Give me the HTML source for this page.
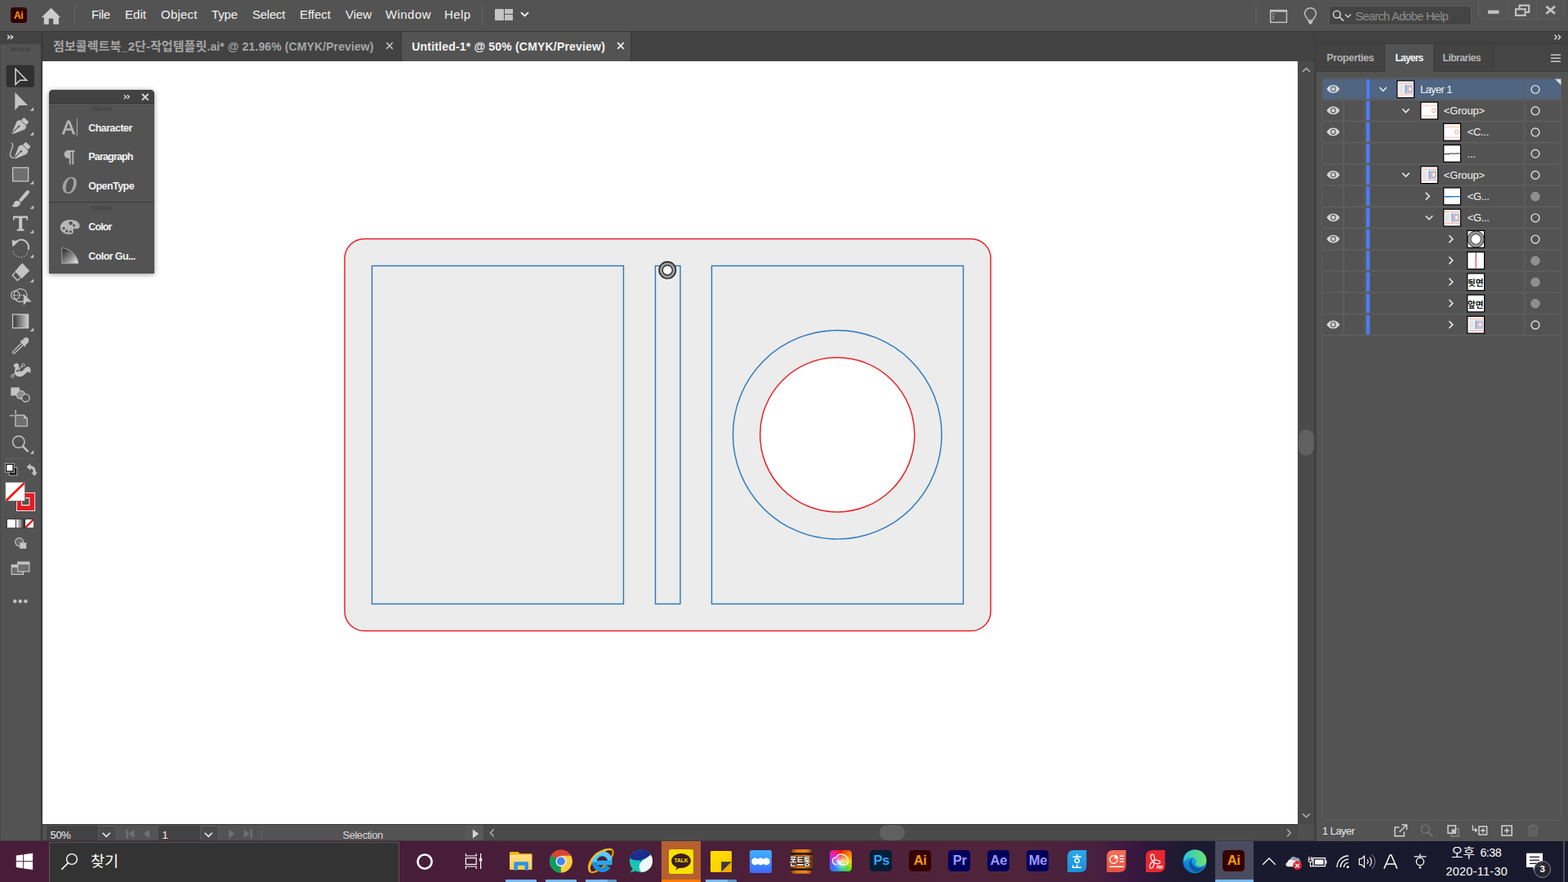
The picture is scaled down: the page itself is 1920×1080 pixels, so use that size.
<!DOCTYPE html>
<html><head><meta charset="utf-8"><title>Untitled-1* @ 50% (CMYK/Preview)</title>
<style>
*{box-sizing:border-box;margin:0;padding:0}
html,body{width:1920px;height:1080px;overflow:hidden;background:#535353}
body{position:relative;font-family:"Liberation Sans",sans-serif;color:#e6e6e6;font-size:13px}
.a{position:absolute}
.t{position:absolute;white-space:nowrap;line-height:1}
svg{position:absolute;overflow:visible}
/* menubar */
#menubar{left:0;top:0;width:1920px;height:38px;background:#535353}
#mline{left:0;top:38px;width:1920px;height:1px;background:#383838}
.menu{font-size:15px;color:#f0f0f0;top:10px}
/* tabbar */
#tabbar{left:52px;top:39px;width:1559px;height:36px;background:#424242}
/* toolbar */
#tb{left:0;top:39px;width:52px;height:991px;background:#484848}
#tbhead{left:0;top:0;width:51px;height:15px;background:#424242}
#tbbody{left:1px;top:15px;width:48px;height:976px;background:#535353;border-radius:3px 3px 0 0}
#tbline{left:51px;top:0;width:1px;height:991px;background:#303030}
/* canvas */
#canvas{left:52px;top:75px;width:1537px;height:934px;background:#fff}
#vscroll{left:1589px;top:75px;width:20px;height:934px;background:#4a4a4a}
/* status */
#status{left:52px;top:1009px;width:1559px;height:21px;background:#535353}
/* right dock */
#dock{left:1609px;top:39px;width:311px;height:991px;background:#535353}
/* taskbar */
#task{left:0;top:1030px;width:1920px;height:50px;background:linear-gradient(90deg,#481d39 0%,#481d39 30%,#4c2039 52%,#50243a 64%,#47203e 70%,#3d1740 72%,#2c1838 73.6%,#1d1a31 75.4%,#1a1a2e 80%,#19192d 100%)}
</style></head><body>
<div class="a" id="menubar"></div><div class="a" id="mline"></div>
<!-- Ai logo -->
<div class="a" style="left:13px;top:9px;width:20px;height:19px;background:#330000;border-radius:3.5px"></div>
<div class="t" style="left:16.9px;top:12.9px;font-size:12px;font-weight:700;color:#ff9a00;letter-spacing:-0.2px">Ai</div>
<!-- home -->
<svg style="left:50px;top:9px" width="25" height="21" viewBox="50 9 25 21"><path fill="#cbcbcb" d="M62.5 9.8 L50.8 21.3 H53.8 V29.8 H59.8 V22.8 H65.2 V29.8 H71.9 V21.3 H74.2 Z"/></svg>
<div class="a" style="left:90.4px;top:6px;width:2.2px;height:25px;background:#5b5b5b"></div>
<div class="t" style="left:112.00px;top:10.30px;font-size:15.0px;letter-spacing:-0.391px;color:#f2f2f2;">File</div>
<div class="t" style="left:153.00px;top:10.30px;font-size:15.0px;letter-spacing:0.047px;color:#f2f2f2;">Edit</div>
<div class="t" style="left:197.00px;top:10.30px;font-size:15.0px;letter-spacing:0.228px;color:#f2f2f2;">Object</div>
<div class="t" style="left:259.00px;top:10.30px;font-size:15.0px;letter-spacing:-0.177px;color:#f2f2f2;">Type</div>
<div class="t" style="left:309.00px;top:10.30px;font-size:15.0px;letter-spacing:-0.241px;color:#f2f2f2;">Select</div>
<div class="t" style="left:367.00px;top:10.30px;font-size:15.0px;letter-spacing:-0.019px;color:#f2f2f2;">Effect</div>
<div class="t" style="left:423.00px;top:10.30px;font-size:15.0px;letter-spacing:-0.083px;color:#f2f2f2;">View</div>
<div class="t" style="left:472.00px;top:10.30px;font-size:15.0px;letter-spacing:0.428px;color:#f2f2f2;">Window</div>
<div class="t" style="left:544.00px;top:10.30px;font-size:15.0px;letter-spacing:0.380px;color:#f2f2f2;">Help</div>
<div class="a" style="left:589.6px;top:6px;width:2.2px;height:25px;background:#5b5b5b"></div>
<!-- workspace icon -->
<div class="a" style="left:606.4px;top:10.8px;width:10.4px;height:14.2px;background:#c4c4c4;border-radius:.5px"></div>
<div class="a" style="left:617.8px;top:10.8px;width:10.4px;height:6.4px;background:#c4c4c4;border-radius:.5px"></div>
<div class="a" style="left:617.8px;top:18.2px;width:10.4px;height:6.8px;background:#c4c4c4;border-radius:.5px"></div>
<svg style="left:636px;top:13px" width="13" height="9" viewBox="0 0 13 9"><path d="M2 2.2 L6.5 6.4 L11 2.2" fill="none" stroke="#f0f0f0" stroke-width="1.9"/></svg>
<!-- right side -->
<div class="a" style="left:1536.8px;top:6px;width:2.2px;height:25px;background:#5b5b5b"></div>
<div class="a" style="left:1626.6px;top:6.5px;width:175px;height:24px;background:#444;border:1px solid #5b5b5b;border-radius:3px"></div>
<div class="t" style="left:1659.40px;top:12.53px;font-size:14.5px;letter-spacing:-0.660px;color:#8e8e8e;">Search Adobe Help</div>
<div class="a" style="left:1810.2px;top:-4px;width:105.2px;height:27.5px;background:#555;border:1px solid #606060;border-radius:5px"></div>
<div class="a" style="left:1846px;top:0;width:1px;height:23px;background:#5e5e5e"></div>
<div class="a" style="left:1880.5px;top:0;width:1px;height:23px;background:#5e5e5e"></div>
<svg style="left:1540px;top:0" width="380" height="38" viewBox="1540 0 380 38">
<rect x="1555.7" y="12.6" width="19.8" height="14.8" fill="none" stroke="#c4c4c4" stroke-width="1.4"/>
<rect x="1555.7" y="12.2" width="19.8" height="2.4" fill="#c4c4c4"/>
<rect x="1558.4" y="16.6" width="1.6" height="1.4" fill="#c4c4c4"/><rect x="1558.4" y="19.4" width="1.6" height="1.4" fill="#c4c4c4"/><rect x="1558.4" y="22.2" width="1.6" height="1.4" fill="#c4c4c4"/>
<path d="M1601.6 24.6 C1601.6 22.6 1597.6 20.6 1597.6 16.8 A7 7 0 0 1 1611.6 16.8 C1611.6 20.6 1607.6 22.6 1607.6 24.6 Z" fill="none" stroke="#c4c4c4" stroke-width="1.4"/>
<path d="M1601.8 25.6 H1607.4 V27.6 L1604.6 30 L1601.8 27.6 Z" fill="#c4c4c4"/>
<circle cx="1637" cy="17.6" r="4.4" fill="none" stroke="#d0d0d0" stroke-width="1.6"/><path d="M1640.2 20.8 L1645.4 25.6" stroke="#d0d0d0" stroke-width="1.8"/>
<path d="M1647 17.6 L1650.6 21 L1654.2 17.6" fill="none" stroke="#d0d0d0" stroke-width="1.4"/>
<rect x="1822" y="12.6" width="13.4" height="4.2" fill="#c2c2c2"/>
<path d="M1860.6 11 V6.6 H1872.2 V14.8 H1868.6" fill="none" stroke="#c2c2c2" stroke-width="2.2"/>
<rect x="1856" y="11.2" width="11.6" height="7.6" fill="none" stroke="#c2c2c2" stroke-width="2.2"/>
<path d="M1893.4 7.8 L1904 16.8 M1904 7.8 L1893.4 16.8" stroke="#c2c2c2" stroke-width="2.8"/>
</svg>

<div class="a" id="tabbar"></div>
<!-- tab 1 (inactive) -->
<div class="a" style="left:491px;top:39px;width:1px;height:36px;background:#383838"></div>
<svg style="left:64.5px;top:47.00px;" width="188.37" height="20.25" viewBox="0 -1000 12558 1350"><text x="0" y="0" font-size="1000" font-weight="700" fill="#a6a6a6" textLength="12558" lengthAdjust="spacingAndGlyphs" font-family="'Liberation Sans','Noto Sans CJK KR',sans-serif">점보콜렉트북_2단-작업템플릿</text></svg>
<div class="t" style="left:253.40px;top:50.15px;font-size:14.0px;font-weight:700;letter-spacing:0.108px;color:#a6a6a6;">.ai* @ 21.96% (CMYK/Preview)</div>
<svg style="left:472px;top:51px" width="10" height="10" viewBox="0 0 10 10"><path d="M1.2 1.2 L8.8 8.8 M8.8 1.2 L1.2 8.8" stroke="#b8b8b8" stroke-width="1.8" fill="none"/></svg>
<!-- tab 2 (active) -->
<div class="a" style="left:492px;top:39px;width:280px;height:36px;background:#535353"></div>
<div class="a" style="left:772px;top:39px;width:1px;height:36px;background:#383838"></div>
<div class="t" style="left:504.30px;top:50.15px;font-size:14.0px;font-weight:700;letter-spacing:0.187px;color:#f4f4f4;">Untitled-1* @ 50% (CMYK/Preview)</div>
<svg style="left:755px;top:51px" width="10" height="10" viewBox="0 0 10 10"><path d="M1.2 1.2 L8.8 8.8 M8.8 1.2 L1.2 8.8" stroke="#ececec" stroke-width="1.8" fill="none"/></svg>

<div class="a" id="canvas"></div>
<svg class="a" style="left:52px;top:75px" width="1537" height="934" viewBox="52 75 1537 934">
<rect x="422.1" y="292.5" width="791" height="480" rx="24" ry="24" fill="#ececec" stroke="#e6232a" stroke-width="1.5"/>
<rect x="455.5" y="325.5" width="308" height="414" fill="none" stroke="#2876bd" stroke-width="1.4"/>
<rect x="802.5" y="325.5" width="30.5" height="414" fill="none" stroke="#2876bd" stroke-width="1.4"/>
<rect x="871.5" y="325.5" width="308" height="414" fill="none" stroke="#2876bd" stroke-width="1.4"/>
<circle cx="1025.3" cy="532.3" r="127.8" fill="none" stroke="#2876bd" stroke-width="1.4"/>
<circle cx="1025.3" cy="532.3" r="94.6" fill="#fff" stroke="#e6232a" stroke-width="1.5"/>
<circle cx="817.3" cy="330.8" r="10.3" fill="#9a9a9a" stroke="#1a1a1a" stroke-width="1.3"/>
<circle cx="817.3" cy="330.8" r="6" fill="#fff" stroke="#1a1a1a" stroke-width="1.2"/>
</svg>

<div class="a" id="vscroll"></div>
<div class="a" id="status"></div>
<!-- vscroll thumb & arrows -->
<div class="a" style="left:1590px;top:526px;width:19px;height:32px;background:#606060;border-radius:9.5px"></div>
<svg style="left:1589px;top:75px" width="20" height="934" viewBox="1589 75 20 934">
<path d="M1595 87.8 L1599.5 83.6 L1604 87.8" fill="none" stroke="#a4a4a4" stroke-width="1.8"/>
<path d="M1595 996.4 L1599.5 1000.6 L1604 996.4" fill="none" stroke="#a4a4a4" stroke-width="1.8"/>
</svg>
<!-- status bar -->
<div class="a" style="left:52px;top:1009px;width:1557px;height:1px;background:#3c3c3c"></div>
<div class="a" style="left:592px;top:1010px;width:997px;height:19px;background:#4a4a4a"></div>
<div class="a" style="left:1589px;top:1009px;width:20px;height:20px;background:#4f4f4f"></div>
<div class="a" style="left:0;top:1028.6px;width:1611px;height:1.4px;background:#3c3c3c;z-index:3"></div>
<div class="a" style="left:1077px;top:1010px;width:31px;height:18.6px;background:#606060;border-radius:9.3px"></div>
<!-- zoom field -->
<div class="a" style="left:57.2px;top:1010.6px;width:62.8px;height:18.4px;background:#424242;border-radius:3px 0 0 0"></div>
<div class="a" style="left:120px;top:1010.5px;width:22.5px;height:18.5px;background:#4b4b4b;border-left:1px solid #5c5c5c;border-top:1px solid #5c5c5c;border-right:1px solid #5c5c5c;border-radius:0 3px 0 0"></div>
<div class="a" style="left:194px;top:1010.6px;width:51px;height:18.4px;background:#424242;border-radius:3px 0 0 0"></div>
<div class="a" style="left:245px;top:1010.5px;width:22.5px;height:18.5px;background:#4b4b4b;border-left:1px solid #5c5c5c;border-top:1px solid #5c5c5c;border-right:1px solid #5c5c5c;border-radius:0 3px 0 0"></div>
<div class="a" style="left:319.5px;top:1011px;width:1px;height:18px;background:#5e5e5e"></div>
<div class="a" style="left:569.5px;top:1010px;width:22.5px;height:18.6px;background:#585858"></div>
<div class="t" style="left:61.60px;top:1015.90px;font-size:13.0px;letter-spacing:-0.366px;color:#f0f0f0;">50%</div>
<div class="t" style="left:198.40px;top:1015.90px;font-size:13.0px;letter-spacing:-1.434px;color:#f0f0f0;">1</div>
<div class="t" style="left:419.50px;top:1015.90px;font-size:13.0px;letter-spacing:-0.473px;color:#d8d8d8;">Selection</div>
<svg style="left:52px;top:1009px" width="1559" height="21" viewBox="52 1009 1559 21">
<path d="M125.6 1019.8 L130.2 1024.4 L134.8 1019.8" fill="none" stroke="#ececec" stroke-width="1.6"/>
<path d="M250.7 1019.8 L255.3 1024.4 L259.9 1019.8" fill="none" stroke="#ececec" stroke-width="1.6"/>
<g fill="#707070">
<rect x="154.5" y="1015.6" width="2.4" height="10.8"/><path d="M164.3 1015.6 V1026.4 L157.4 1021 Z"/>
<path d="M183.2 1015.6 V1026.4 L176 1021 Z"/>
<path d="M280.2 1015.6 V1026.4 L287.2 1021 Z"/>
<path d="M298.6 1015.6 V1026.4 L305.6 1021 Z"/><rect x="306.4" y="1015.6" width="2.4" height="10.8"/>
</g>
<path d="M578.9 1015.6 V1026.4 L586.2 1021 Z" fill="#d4d4d4"/>
<path d="M604.6 1015.4 L600.6 1019.8 L604.6 1024.2" fill="none" stroke="#b4b4b4" stroke-width="1.4"/>
<path d="M1576.2 1015.4 L1580.2 1019.8 L1576.2 1024.2" fill="none" stroke="#b4b4b4" stroke-width="1.4"/>
</svg>

<div class="a" id="tb"><div class="a" id="tbhead"></div><div class="a" id="tbbody"></div><div class="a" id="tbline"></div></div>
<svg style="left:0;top:39px" width="52" height="991" viewBox="0 39 52 991">
<defs>
<linearGradient id="gr1" x1="0" x2="1" y1="0" y2="0"><stop offset="0" stop-color="#333"/><stop offset="1" stop-color="#d0d0d0"/></linearGradient>
<linearGradient id="gr2" x1="0" x2="1" y1="0" y2="0"><stop offset="0" stop-color="#fff"/><stop offset="1" stop-color="#222"/></linearGradient>
<path id="tri" d="M4.6 0 V4.6 H0 Z" fill="#c4c4c4"/>
</defs>
<!-- chevrons -->
<path d="M9.2 43 L11.8 45.4 L9.2 47.8 M13 43 L15.6 45.4 L13 47.8" fill="none" stroke="#e0e0e0" stroke-width="1.5"/>
<!-- grip -->
<g fill="#3c3c3c"><rect x="13" y="58" width="1" height="5"/><rect x="15.5" y="58" width="1" height="5"/><rect x="18" y="58" width="1" height="5"/><rect x="20.5" y="58" width="1" height="5"/><rect x="23" y="58" width="1" height="5"/><rect x="25.5" y="58" width="1" height="5"/><rect x="28" y="58" width="1" height="5"/><rect x="30.5" y="58" width="1" height="5"/><rect x="33" y="58" width="1" height="5"/><rect x="35.5" y="58" width="1" height="5"/></g>
<!-- selection (active) -->
<rect x="7.5" y="79.8" width="34.5" height="27" rx="2.5" fill="#303030"/>
<path d="M19 84.3 V103.6 L24.6 98.2 H32.6 Z" fill="none" stroke="#d6d6d6" stroke-width="1.5" stroke-linejoin="miter"/>
<!-- direct selection -->
<path d="M18.3 113 V135 L23.6 129 H34 Z" fill="#c4c4c4"/>
<use href="#tri" x="36.6" y="131.2"/>
<!-- pen -->
<g fill="#c4c4c4">
<path d="M14.4 163 L20.6 148.6 L24.8 146.6 L32.4 154.4 L30.4 158.6 L16.2 164 Z"/>
<rect x="-4.2" y="-2.9" width="8.4" height="5.8" rx="1" transform="translate(30.3 148.7) rotate(43)"/>
</g>
<path d="M24.2 145.8 L33.2 155" stroke="#535353" stroke-width="0.9"/><path d="M15.2 162.6 L22.8 155" stroke="#535353" stroke-width="1.1"/><circle cx="23.3" cy="154.6" r="1.2" fill="#535353"/>
<use href="#tri" x="36.6" y="161.2"/>
<!-- curvature pen -->
<g fill="#c4c4c4">
<path d="M17.2 193.6 L23 179 L27.4 177 L34.8 184.6 L32.8 188.6 L19 194.4 Z"/>
<rect x="-4.2" y="-2.9" width="8.4" height="5.8" rx="1" transform="translate(32.6 178.7) rotate(43)"/>
</g>
<path d="M26.6 176.2 L35.6 185.4" stroke="#535353" stroke-width="0.9"/><path d="M18 193.2 L25.4 185.6" stroke="#535353" stroke-width="1.1"/><circle cx="25.8" cy="185.2" r="1.2" fill="#535353"/>
<path d="M13.6 175 C19 178 12.4 184 12.4 189 C12.4 192.6 15 193.6 17.2 193.2" fill="none" stroke="#c4c4c4" stroke-width="1.3"/>
<!-- rectangle -->
<rect x="15.6" y="205.3" width="19" height="16.6" fill="#6f6f6f" stroke="#c8c8c8" stroke-width="1.3"/>
<use href="#tri" x="36.6" y="221.2"/>
<!-- brush -->
<path d="M35.6 233.6 C34.2 232.4 32.6 233.4 31.6 234.6 L23 244.8 L25.8 247.4 L34.8 237.8 C36 236.4 36.6 234.6 35.6 233.6 Z" fill="#c4c4c4"/>
<path d="M22.2 245.8 C19.6 245.2 17.8 246.6 17 248.8 C16.4 250.6 15.6 251.8 14.4 252.6 C17.4 254.2 21.6 253.8 23.6 251.6 C25 250 25.2 248 24.6 247.2 Z" fill="#c4c4c4"/>
<use href="#tri" x="36.6" y="251.2"/>
<!-- type -->
<path d="M16 264.4 H34 V269.8 H32.5 V267 H27.2 V280.5 H29.5 V282.8 H20.8 V280.5 H23.2 V267 H17.5 V269.8 H16 Z" fill="#c4c4c4"/>
<use href="#tri" x="36.6" y="281.2"/>
<!-- rotate -->
<path d="M18.2 297.6 A9.3 9.3 0 0 1 34.6 306" fill="none" stroke="#c4c4c4" stroke-width="2"/>
<path d="M14.6 294 L22.8 295.6 L15.4 302.4 Z" fill="#c4c4c4"/>
<path d="M34 308.4 A9.3 9.3 0 0 1 15.8 306.6" fill="none" stroke="#c4c4c4" stroke-width="1.4" stroke-dasharray="1.1 2.2"/>
<use href="#tri" x="36.6" y="311.2"/>
<!-- eraser -->
<path d="M27.2 322 L36.2 331.6 L26.6 341.2 L18.2 332.2 Z" fill="#c4c4c4"/>
<path d="M18.6 333.6 L15.2 337 L21.4 343.4 L24.6 340.2" fill="none" stroke="#c4c4c4" stroke-width="1.4" stroke-linejoin="round"/>
<use href="#tri" x="36.6" y="341.2"/>
<!-- shape builder -->
<circle cx="18.8" cy="361.4" r="5.2" fill="none" stroke="#c4c4c4" stroke-width="1.2"/>
<circle cx="25" cy="361.6" r="8" fill="none" stroke="#c4c4c4" stroke-width="1.2"/>
<path d="M16 361.5 H29" stroke="#e0e0e0" stroke-width="1" stroke-dasharray="1.2 1.2"/>
<path d="M28.8 360 V374 L32.6 369.6 H38.8 Z" fill="#c4c4c4"/>
<!-- gradient -->
<rect x="15.6" y="385" width="19" height="16.6" fill="url(#gr1)" stroke="#c8c8c8" stroke-width="1.3"/>
<use href="#tri" x="36.6" y="401.2"/>
<!-- eyedropper -->
<path d="M26.2 420.2 L16 430.4 C14.6 431.8 16.2 433.6 17.8 432.4 L28.4 422.6" fill="none" stroke="#c4c4c4" stroke-width="1.3"/>
<path d="M24.6 418 L26.4 416.2 L27.4 417.2 C28 414.6 30.6 412.6 33.4 413.4 C35.2 414 35.6 416.2 35 418.2 C34.4 420.2 32.6 421.6 31 422 L32 423 L30.2 424.8 Z" fill="#c4c4c4"/>
<!-- puppet/warp -->
<path d="M16.4 448.8 C17.4 444.4 21.2 443.4 22.8 446.6 C24 449 22.8 451.6 22.2 453.6 C24.2 456 27.4 455 29.6 452 C31.8 449 34.8 448 36.6 450.2 C38 452 37.6 455 37 457.6 C36.2 455.4 34.8 454.6 33.2 455.8 C30.8 457.6 28.6 461.4 23.6 461.2 C19.2 461 17.2 457.6 18 454 C18.6 451.4 19.8 449.6 16.4 448.8 Z" fill="#c4c4c4"/>
<path d="M15.6 460.2 L28 447.4" stroke="#c4c4c4" stroke-width="1.2"/>
<circle cx="15.2" cy="460.6" r="1.7" fill="#535353" stroke="#c4c4c4" stroke-width="1"/>
<circle cx="28.4" cy="447" r="1.7" fill="#535353" stroke="#c4c4c4" stroke-width="1"/>
<circle cx="21.6" cy="454" r="1.9" fill="#535353" stroke="#c4c4c4" stroke-width="1"/>
<!-- blend -->
<rect x="13.3" y="474.4" width="10.6" height="10" fill="#c4c4c4"/>
<path d="M20.2 484 C20.2 479.6 24 477.6 27 478.6 C29 479.2 30 480.6 30.4 482 L26.4 488.4 C22.6 488.6 20.2 486.6 20.2 484 Z" fill="#8a8a8a" stroke="#c4c4c4" stroke-width="1.1"/>
<circle cx="31.4" cy="487.3" r="4.7" fill="#535353" stroke="#c4c4c4" stroke-width="1.4"/>
<!-- artboard -->
<path d="M19.1 502 V507 M12 508.9 H17.4" stroke="#c4c4c4" stroke-width="1.4"/>
<path d="M18.9 508.4 H29.4 L33.4 512.4 V521.8 H18.9 Z" fill="#6f6f6f" stroke="#c4c4c4" stroke-width="1.3"/>
<path d="M29.2 508.2 L33.6 512.6 H29.2 Z" fill="#c4c4c4"/>
<!-- zoom -->
<circle cx="22.8" cy="541.1" r="7.2" fill="none" stroke="#c4c4c4" stroke-width="1.5"/>
<path d="M28 546.6 L34.6 553.2" stroke="#c4c4c4" stroke-width="2.4"/>
<use href="#tri" x="36.6" y="551.2"/>
<!-- separator -->
<rect x="6" y="561" width="38" height="1" fill="#606060"/>
<!-- default fill/stroke -->
<rect x="11.2" y="572.4" width="9.6" height="9.6" fill="#000" stroke="#c4c4c4" stroke-width="0.9"/>
<rect x="15" y="576.2" width="3" height="3" fill="none" stroke="#8a8a8a" stroke-width="0.9"/>
<rect x="7.4" y="568.4" width="8.8" height="8.8" fill="#fff" stroke="#000" stroke-width="1.4"/>
<rect x="6.4" y="567.4" width="10.8" height="10.8" fill="none" stroke="#c4c4c4" stroke-width="0.8"/>
<!-- swap -->
<path d="M32.6 571.8 L37.4 567.6 V570.4 C42.6 570.6 44 574.6 43.8 578.4 H45.8 L42.2 583 L38.4 578.4 H40.6 C40.8 575.6 40 573.8 37.4 573.6 V576 Z" fill="#c4c4c4"/>
<!-- stroke box -->
<rect x="19.3" y="602.3" width="24.5" height="24.3" fill="#3a3a3a"/><rect x="19.9" y="602.9" width="23.3" height="23.1" fill="#fff"/>
<rect x="20.8" y="603.8" width="21.5" height="21.3" fill="#e31b23"/>
<rect x="26.1" y="609.2" width="10.2" height="10" fill="#fff"/>
<rect x="27.2" y="610.3" width="8.2" height="7.8" fill="#535353"/>
<!-- fill box -->
<rect x="6.1" y="590" width="24.8" height="23.9" fill="#7a7a7a"/>
<rect x="7.1" y="591" width="22.9" height="22" fill="#fff"/>
<clipPath id="fbc"><rect x="7.1" y="591" width="22.9" height="22"/></clipPath><path d="M6.4 614.2 L30.8 590.4" stroke="#ff0000" stroke-width="2.6" clip-path="url(#fbc)"/>
<!-- color modes -->
<rect x="7.2" y="634.8" width="34.8" height="12" fill="#3e3e3e"/>
<rect x="8.9" y="636.1" width="10" height="10" fill="#fff"/>
<rect x="20" y="636.1" width="10" height="10" fill="url(#gr2)"/>
<rect x="31.1" y="636.1" width="10" height="10" fill="#fff"/>
<clipPath id="fbd"><rect x="31.1" y="636.1" width="10" height="10"/></clipPath><path d="M30.2 647 L42 635.2" stroke="#ff0000" stroke-width="2.3" clip-path="url(#fbd)"/>
<!-- draw mode -->
<circle cx="23.6" cy="663.6" r="5" fill="#6a6a6a" stroke="#c4c4c4" stroke-width="1.1"/>
<rect x="24.2" y="664.4" width="8" height="7.4" fill="#c4c4c4"/>
<!-- screen mode -->
<rect x="14.2" y="691.8" width="14.4" height="11.6" fill="#6f6f6f" stroke="#c4c4c4" stroke-width="1.2"/>
<rect x="14.2" y="691.8" width="14.4" height="3" fill="#c4c4c4"/>
<rect x="21.7" y="688.2" width="14.2" height="11.6" fill="#6f6f6f" stroke="#c4c4c4" stroke-width="1.2"/>
<rect x="21.7" y="688.2" width="14.2" height="3" fill="#c4c4c4"/>
<!-- dots -->
<circle cx="18.3" cy="736.3" r="2.2" fill="#c4c4c4"/><circle cx="24.8" cy="736.3" r="2.2" fill="#c4c4c4"/><circle cx="31.4" cy="736.3" r="2.2" fill="#c4c4c4"/>
</svg>

<div class="a" style="left:60px;top:110px;width:129px;height:225px;background:#535353;border-radius:5px 5px 0 0;box-shadow:0 1px 6px rgba(0,0,0,.4);overflow:hidden">
<div class="a" style="left:0;top:0;width:129px;height:16px;background:#424242"></div>
<div class="a" style="left:0;top:16px;width:129px;height:1px;background:#363636"></div>
<div class="a" style="left:0;top:137px;width:129px;height:1px;background:#3a3a3a"></div>
</div>
<svg style="left:60px;top:110px" width="129" height="225" viewBox="60 110 129 225">
<path d="M152 116.3 L154.4 118.6 L152 120.9 M155.8 116.3 L158.2 118.6 L155.8 120.9" fill="none" stroke="#d8d8d8" stroke-width="1.4"/>
<path d="M174 115 L181.6 122.6 M181.6 115 L174 122.6" stroke="#d8d8d8" stroke-width="1.9"/>
<g fill="#3c3c3c"><rect x="113" y="131.2" width="1" height="4.6"/><rect x="115.5" y="131.2" width="1" height="4.6"/><rect x="118" y="131.2" width="1" height="4.6"/><rect x="120.5" y="131.2" width="1" height="4.6"/><rect x="123" y="131.2" width="1" height="4.6"/><rect x="125.5" y="131.2" width="1" height="4.6"/><rect x="128" y="131.2" width="1" height="4.6"/><rect x="130.5" y="131.2" width="1" height="4.6"/><rect x="133" y="131.2" width="1" height="4.6"/><rect x="135.5" y="131.2" width="1" height="4.6"/></g>
<g fill="#3c3c3c"><rect x="113" y="252.6" width="1" height="4.6"/><rect x="115.5" y="252.6" width="1" height="4.6"/><rect x="118" y="252.6" width="1" height="4.6"/><rect x="120.5" y="252.6" width="1" height="4.6"/><rect x="123" y="252.6" width="1" height="4.6"/><rect x="125.5" y="252.6" width="1" height="4.6"/><rect x="128" y="252.6" width="1" height="4.6"/><rect x="130.5" y="252.6" width="1" height="4.6"/><rect x="133" y="252.6" width="1" height="4.6"/><rect x="135.5" y="252.6" width="1" height="4.6"/></g>
<!-- Character icon A| -->
<path d="M76 164.2 L82.4 147.7 H85.4 L91.9 164.2 H89.2 L87.5 159.6 H80.2 L78.6 164.2 Z M81 157.4 H86.7 L83.9 149.8 Z" fill="#b6b6b6" stroke="#b6b6b6" stroke-width="0.5" fill-rule="evenodd"/>
<rect x="93.8" y="145" width="1.2" height="22" fill="#9c9c9c"/>
<!-- Paragraph -->
<path d="M83.6 184 H91.6 V186 H90.2 V201.4 H88.4 V186 H86.6 V201.4 H84.8 V194 H83.6 A5 5 0 0 1 83.6 184 Z" fill="#b6b6b6"/>
<!-- OpenType O -->
<path d="M87.6 216.8 C92.6 216.8 94.6 221 93.6 226.4 C92.6 232 88.6 237 83.4 237 C78.4 237 75.8 232.8 77 226.8 C78.2 221.2 82.4 216.8 87.6 216.8 Z M87.2 218.2 C84.4 218.2 82 222.4 81 227 C80 231.6 80.8 235.6 83.8 235.6 C86.6 235.6 88.8 231.4 89.8 226.6 C90.8 222 90 218.2 87.2 218.2 Z" fill="#a2a2a2" fill-rule="evenodd"/>
<!-- palette -->
<path d="M86 269 C93 269 97.8 272.6 97.6 277 C97.4 280.4 94 280.6 92.4 280 C90.4 279.4 89.2 280.6 89.8 282.4 C90.6 284.8 88.8 286.8 84.8 286.8 C78.6 286.8 73.8 283.4 73.8 278.4 C73.8 273 79.2 269 86 269 Z" fill="#b6b6b6"/>
<g fill="#535353"><circle cx="78" cy="279.6" r="1.7"/><circle cx="81.8" cy="283" r="1.7"/><circle cx="86.4" cy="283.4" r="1.5"/><circle cx="90.6" cy="276" r="1.6"/><circle cx="86.6" cy="273.2" r="2.2"/></g>
<!-- color guide -->
<defs><linearGradient id="cg" x1="0" x2="1" y1="0" y2="1"><stop offset="0" stop-color="#222"/><stop offset=".55" stop-color="#888"/><stop offset="1" stop-color="#f2f2f2"/></linearGradient></defs>
<path d="M75.8 303.6 C86 304.4 94.4 312 96 322.6 H75.8 Z" fill="url(#cg)" stroke="#a8a8a8" stroke-width="0.9"/>
</svg>
<div class="t" style="left:108.30px;top:151.22px;font-size:12.5px;font-weight:700;letter-spacing:-0.547px;color:#f2f2f2;">Character</div>
<div class="t" style="left:108.30px;top:186.42px;font-size:12.5px;font-weight:700;letter-spacing:-0.830px;color:#f2f2f2;">Paragraph</div>
<div class="t" style="left:108.30px;top:221.62px;font-size:12.5px;font-weight:700;letter-spacing:-0.558px;color:#f2f2f2;">OpenType</div>
<div class="t" style="left:108.30px;top:272.42px;font-size:12.5px;font-weight:700;letter-spacing:-0.885px;color:#f2f2f2;">Color</div>
<div class="t" style="left:108.30px;top:307.62px;font-size:12.5px;font-weight:700;letter-spacing:-0.599px;color:#f2f2f2;">Color Gu...</div>

<div class="a" id="dock"></div>
<div class="a" style="left:1609px;top:39px;width:3px;height:991px;background:#3a3a3a"></div>
<div class="a" style="left:1610px;top:39px;width:1px;height:991px;background:#4a4a4a"></div>
<div class="a" style="left:1612px;top:39px;width:308px;height:14px;background:#424242"></div>
<div class="a" style="left:1612px;top:53px;width:308px;height:1px;background:#383838"></div>
<div class="a" style="left:1612px;top:54px;width:308px;height:34px;background:#454545"></div>
<div class="a" style="left:1612px;top:54px;width:83px;height:33px;background:#434343"></div>
<div class="a" style="left:1695px;top:54px;width:1px;height:33px;background:#3c3c3c"></div>
<div class="a" style="left:1696px;top:54px;width:59px;height:34px;background:#535353"></div>
<div class="a" style="left:1755px;top:54px;width:1px;height:33px;background:#3c3c3c"></div>
<div class="a" style="left:1756px;top:54px;width:72px;height:33px;background:#434343"></div>
<div class="a" style="left:1828px;top:54px;width:1px;height:33px;background:#3c3c3c"></div>
<div class="a" style="left:1612px;top:87px;width:84px;height:1px;background:#3c3c3c"></div>
<div class="a" style="left:1755px;top:87px;width:165px;height:1px;background:#3c3c3c"></div>
<div class="t" style="left:1624.50px;top:65.19px;font-size:12.3px;font-weight:700;letter-spacing:-0.292px;color:#b4b4b4;">Properties</div>
<div class="t" style="left:1708.50px;top:65.44px;font-size:12.0px;font-weight:700;letter-spacing:-0.781px;color:#f4f4f4;">Layers</div>
<div class="t" style="left:1766.50px;top:65.19px;font-size:12.3px;font-weight:700;letter-spacing:-0.619px;color:#b4b4b4;">Libraries</div>
<div class="a" style="left:1618.2px;top:95px;width:294px;height:910px;border:1.5px solid #5f5f5f;border-radius:3.5px;background:#535353"></div>
<svg style="left:1612px;top:39px" width="308" height="991" viewBox="1612 39 308 991">
<defs>
<g id="eye"><path d="M-8 0 C-5.4 -3.9 -2.6 -4.9 0 -4.9 C2.6 -4.9 5.4 -3.9 8 0 C5.4 3.9 2.6 4.9 0 4.9 C-2.6 4.9 -5.4 3.9 -8 0 Z" fill="#d8d8d8"/><circle r="2.9" fill="none" stroke="#535353" stroke-width="1.1"/><circle cx="0.3" cy="-0.3" r="1.2" fill="#c0c0c0"/></g>
<g id="eye0"><path d="M-8 0 C-5.4 -3.9 -2.6 -4.9 0 -4.9 C2.6 -4.9 5.4 -3.9 8 0 C5.4 3.9 2.6 4.9 0 4.9 C-2.6 4.9 -5.4 3.9 -8 0 Z" fill="#d8d8d8"/><circle r="2.9" fill="none" stroke="#4f6581" stroke-width="1.1"/><circle cx="0.3" cy="-0.3" r="1.2" fill="#c0c0c0"/></g>
<path id="cd" d="M-4.2 -2.2 L0 2.2 L4.2 -2.2" fill="none" stroke="#f0f0f0" stroke-width="1.5"/>
<path id="cr" d="M-2.2 -4.4 L2.2 0 L-2.2 4.4" fill="none" stroke="#f0f0f0" stroke-width="1.5"/>
<g id="tA"><rect width="22" height="22" fill="#000"/><rect x="1.2" y="1.2" width="19.6" height="19.6" fill="#fff"/><rect x="1.2" y="3.6" width="19.6" height="0.9" fill="#f0a090"/><rect x="1.2" y="17.2" width="19.6" height="0.9" fill="#f0a090"/><rect x="2.6" y="5.6" width="5.6" height="10.6" fill="#e4e4e4"/><rect x="9.4" y="5.6" width="10.6" height="10.6" fill="#b8c6e2"/><rect x="10.8" y="5.6" width="0.9" height="10.6" fill="#8fa4cc"/><ellipse cx="16.4" cy="10.8" rx="2.3" ry="2.8" fill="#fff" stroke="#ee8e7c" stroke-width="0.9"/></g>
<g id="tB"><rect width="22" height="22" fill="#000"/><rect x="1.2" y="1.2" width="19.6" height="19.6" fill="#fff"/><rect x="1.2" y="4.2" width="19.6" height="0.8" fill="#f4b0a4"/><rect x="1.2" y="17" width="19.6" height="0.8" fill="#f4b0a4"/><ellipse cx="16.4" cy="10.8" rx="2.1" ry="2.6" fill="#fff" stroke="#ee8e7c" stroke-width="0.8"/></g>
<g id="tC"><rect width="22" height="22" fill="#000"/><rect x="1.2" y="1.2" width="19.6" height="19.6" fill="#fff"/><path d="M1.4 11.6 H8 L9 11 H12 L13 11.6 L15 11 H20.6" stroke="#222" stroke-width="1" fill="none"/></g>
<g id="tD"><rect width="22" height="22" fill="#000"/><rect x="1.2" y="1.2" width="19.6" height="19.6" fill="#fff"/><rect x="1.4" y="10.6" width="19.2" height="1.4" fill="#2a78c4"/><rect x="2" y="11.6" width="9" height="0.8" fill="#7ab0e0"/></g>
<g id="tE"><rect width="22" height="22" fill="#000"/><rect x="1.2" y="1.2" width="19.6" height="19.6" fill="#fff"/><circle cx="11" cy="11" r="8.1" fill="none" stroke="#222" stroke-width="4.6"/><circle cx="11" cy="11" r="8.1" fill="none" stroke="#969696" stroke-width="3.2"/></g>
<g id="tF"><rect width="22" height="22" fill="#000"/><rect x="1.2" y="1.2" width="19.6" height="19.6" fill="#fff"/><rect x="10.6" y="1.4" width="0.9" height="7" fill="#333"/><rect x="10.4" y="8" width="1.1" height="12.6" fill="#e8303a"/></g>
<g id="tG"><rect width="22" height="22" fill="#000"/><rect x="1.2" y="1.2" width="19.6" height="19.6" fill="#fff"/></g>
</defs>
<rect x="1619.7" y="96.80" width="291.3" height="24.6" fill="#4f6581"/>
<path d="M1904 96.80 H1911.5 V104.30 Z" fill="#dcdcdc"/>
<rect x="1619.7" y="121.40" width="291.3" height="1.6" fill="#5f5f5f"/>
<rect x="1673" y="97.40" width="4.3" height="23.6" fill="#4a7dff"/>
<use href="#eye0" x="1632.5" y="109.00"/>
<use href="#cd" x="1693.6" y="109.20"/>
<use href="#tA" x="1710.2" y="98.30"/>
<circle cx="1880" cy="109.50" r="4.9" fill="none" stroke="#dcdcdc" stroke-width="1.4"/>
<rect x="1619.7" y="147.62" width="291.3" height="1.6" fill="#5f5f5f"/>
<rect x="1673" y="123.62" width="4.3" height="23.6" fill="#4a7dff"/>
<use href="#eye" x="1632.5" y="135.22"/>
<use href="#cd" x="1721.4" y="135.42"/>
<use href="#tB" x="1739.2" y="124.52"/>
<circle cx="1880" cy="135.72" r="4.9" fill="none" stroke="#dcdcdc" stroke-width="1.4"/>
<rect x="1619.7" y="173.84" width="291.3" height="1.6" fill="#5f5f5f"/>
<rect x="1673" y="149.84" width="4.3" height="23.6" fill="#4a7dff"/>
<use href="#eye" x="1632.5" y="161.44"/>
<use href="#tB" x="1767.1" y="150.74"/>
<circle cx="1880" cy="161.94" r="4.9" fill="none" stroke="#dcdcdc" stroke-width="1.4"/>
<rect x="1619.7" y="200.06" width="291.3" height="1.6" fill="#5f5f5f"/>
<rect x="1673" y="176.06" width="4.3" height="23.6" fill="#4a7dff"/>
<use href="#tC" x="1767.1" y="176.96"/>
<circle cx="1880" cy="188.16" r="4.9" fill="none" stroke="#dcdcdc" stroke-width="1.4"/>
<rect x="1619.7" y="226.28" width="291.3" height="1.6" fill="#5f5f5f"/>
<rect x="1673" y="202.28" width="4.3" height="23.6" fill="#4a7dff"/>
<use href="#eye" x="1632.5" y="213.88"/>
<use href="#cd" x="1721.4" y="214.08"/>
<use href="#tA" x="1739.2" y="203.18"/>
<circle cx="1880" cy="214.38" r="4.9" fill="none" stroke="#dcdcdc" stroke-width="1.4"/>
<rect x="1619.7" y="252.50" width="291.3" height="1.6" fill="#5f5f5f"/>
<rect x="1673" y="228.50" width="4.3" height="23.6" fill="#4a7dff"/>
<use href="#cr" x="1748" y="240.30"/>
<use href="#tD" x="1767.1" y="229.40"/>
<circle cx="1880" cy="240.60" r="5.2" fill="#8e8e8e" stroke="#9c9c9c" stroke-width="1"/>
<rect x="1619.7" y="278.72" width="291.3" height="1.6" fill="#5f5f5f"/>
<rect x="1673" y="254.72" width="4.3" height="23.6" fill="#4a7dff"/>
<use href="#eye" x="1632.5" y="266.32"/>
<use href="#cd" x="1750" y="266.52"/>
<use href="#tA" x="1767.1" y="255.62"/>
<circle cx="1880" cy="266.82" r="4.9" fill="none" stroke="#dcdcdc" stroke-width="1.4"/>
<rect x="1619.7" y="304.94" width="291.3" height="1.6" fill="#5f5f5f"/>
<rect x="1673" y="280.94" width="4.3" height="23.6" fill="#4a7dff"/>
<use href="#eye" x="1632.5" y="292.54"/>
<use href="#cr" x="1776.6" y="292.74"/>
<use href="#tE" x="1796.2" y="281.84"/>
<circle cx="1880" cy="293.04" r="4.9" fill="none" stroke="#dcdcdc" stroke-width="1.4"/>
<rect x="1619.7" y="331.16" width="291.3" height="1.6" fill="#5f5f5f"/>
<rect x="1673" y="307.16" width="4.3" height="23.6" fill="#4a7dff"/>
<use href="#cr" x="1776.6" y="318.96"/>
<use href="#tF" x="1796.2" y="308.06"/>
<circle cx="1880" cy="319.26" r="5.2" fill="#8e8e8e" stroke="#9c9c9c" stroke-width="1"/>
<rect x="1619.7" y="357.38" width="291.3" height="1.6" fill="#5f5f5f"/>
<rect x="1673" y="333.38" width="4.3" height="23.6" fill="#4a7dff"/>
<use href="#cr" x="1776.6" y="345.18"/>
<use href="#tG" x="1796.2" y="334.28"/>
<circle cx="1880" cy="345.48" r="5.2" fill="#8e8e8e" stroke="#9c9c9c" stroke-width="1"/>
<rect x="1619.7" y="383.60" width="291.3" height="1.6" fill="#5f5f5f"/>
<rect x="1673" y="359.60" width="4.3" height="23.6" fill="#4a7dff"/>
<use href="#cr" x="1776.6" y="371.40"/>
<use href="#tG" x="1796.2" y="360.50"/>
<circle cx="1880" cy="371.70" r="5.2" fill="#8e8e8e" stroke="#9c9c9c" stroke-width="1"/>
<rect x="1619.7" y="409.82" width="291.3" height="1.6" fill="#5f5f5f"/>
<rect x="1673" y="385.82" width="4.3" height="23.6" fill="#4a7dff"/>
<use href="#eye" x="1632.5" y="397.42"/>
<use href="#cr" x="1776.6" y="397.62"/>
<use href="#tA" x="1796.2" y="386.72"/>
<circle cx="1880" cy="397.92" r="4.9" fill="none" stroke="#dcdcdc" stroke-width="1.4"/>
<rect x="1644.5" y="96.80" width="1.5" height="314.64" fill="#5f5f5f"/>
<rect x="1671" y="96.80" width="1.5" height="314.64" fill="#5f5f5f"/>
<rect x="1865.8" y="96.80" width="1.5" height="314.64" fill="#5f5f5f"/>
<path d="M1903.6 42.8 L1906.2 45.6 L1903.6 48.4 M1908 42.8 L1910.6 45.6 L1908 48.4" fill="none" stroke="#d8d8d8" stroke-width="1.4"/>
<path d="M1899 67.3 H1911 M1899 71.3 H1911 M1899 75.3 H1911" stroke="#c8c8c8" stroke-width="1.5"/>
<g fill="none" stroke="#d2d2d2" stroke-width="1.5">
<path d="M1713.4 1013 H1708 V1023.8 H1719.4 V1018.4"/><path d="M1713.6 1018.6 L1722.4 1010 M1716.4 1009.9 H1722.5 V1016"/>
<rect x="1811" y="1012" width="9.6" height="10"/><path d="M1813 1017 H1818.6 M1815.8 1014.2 V1019.8" stroke-width="1.3"/>
<path d="M1803.4 1010.4 V1016.4 H1806.4" stroke-width="1.3"/>
<rect x="1839" y="1011.2" width="12.2" height="11.8"/><path d="M1842 1017.1 H1848.2 M1845.1 1014 V1020.2"/>
</g>
<path d="M1806 1013.4 L1809.6 1016.4 L1806 1019.4 Z" fill="#d2d2d2"/>
<rect x="1777" y="1014.8" width="9.2" height="9.2" fill="none" stroke="#8c8c8c" stroke-width="1.4"/>
<rect x="1773" y="1011" width="9.4" height="9.2" fill="#535353" stroke="#d2d2d2" stroke-width="1.5"/>
<rect x="1777.6" y="1015.4" width="4.2" height="4.2" fill="#c8c8c8"/>
<circle cx="1745.3" cy="1015.3" r="4.9" fill="none" stroke="#747474" stroke-width="1.4"/><path d="M1748.8 1019 L1754 1024.2" stroke="#747474" stroke-width="1.8"/>
<g fill="none" stroke="#6e6e6e" stroke-width="1.2"><path d="M1870.4 1012.4 H1883.4 M1874.4 1012.2 V1009.8 H1879.4 V1012.2 M1872 1012.6 L1872.6 1023.4 H1881.2 L1881.8 1012.6 M1874.8 1014.4 V1021.8 M1877 1014.4 V1021.8 M1879.2 1014.4 V1021.8"/></g>
</svg>
<div class="t" style="left:1738.90px;top:103.00px;font-size:13.0px;letter-spacing:-0.646px;color:#f4f4f4;">Layer 1</div>
<div class="t" style="left:1767.80px;top:129.22px;font-size:13.0px;letter-spacing:-0.171px;color:#f4f4f4;">&lt;Group&gt;</div>
<div class="t" style="left:1796.70px;top:155.44px;font-size:13.0px;letter-spacing:-0.307px;color:#f4f4f4;">&lt;C...</div>
<div class="t" style="left:1796.60px;top:181.66px;font-size:13.0px;letter-spacing:-0.222px;color:#f4f4f4;">...</div>
<div class="t" style="left:1767.80px;top:207.88px;font-size:13.0px;letter-spacing:-0.171px;color:#f4f4f4;">&lt;Group&gt;</div>
<div class="t" style="left:1796.70px;top:234.10px;font-size:13.0px;letter-spacing:-0.312px;color:#f4f4f4;">&lt;G...</div>
<div class="t" style="left:1796.70px;top:260.32px;font-size:13.0px;letter-spacing:-0.312px;color:#f4f4f4;">&lt;G...</div>
<div class="a" style="left:1797.4px;top:335.48px;width:19.6px;height:19.6px;overflow:hidden"><svg style="left:-0.4px;top:4.00px;" width="19.50" height="14.31" viewBox="0 -1000 1840 1350"><text x="0" y="0" font-size="1000" font-weight="700" fill="#111" textLength="1840" lengthAdjust="spacingAndGlyphs" font-family="'Liberation Sans','Noto Sans CJK KR',sans-serif">뒷면</text></svg></div>
<div class="a" style="left:1797.4px;top:361.70px;width:19.6px;height:19.6px;overflow:hidden"><svg style="left:-0.4px;top:4.00px;" width="19.50" height="14.31" viewBox="0 -1000 1840 1350"><text x="0" y="0" font-size="1000" font-weight="700" fill="#111" textLength="1840" lengthAdjust="spacingAndGlyphs" font-family="'Liberation Sans','Noto Sans CJK KR',sans-serif">앞면</text></svg></div>
<div class="t" style="left:1619.00px;top:1011.00px;font-size:13.0px;letter-spacing:-0.562px;color:#e8e8e8;">1 Layer</div>
<div class="a" id="task"></div>
<!-- search box -->
<div class="a" style="left:60px;top:1031px;width:429px;height:49px;background:#333;border:1px solid #5a5a5a;border-bottom:none"></div>
<!-- kakao highlight -->
<div class="a" style="left:810px;top:1030px;width:48px;height:47px;background:#b5602f"></div>
<div class="a" style="left:810px;top:1077px;width:48px;height:3px;background:#ff7a00"></div>
<!-- active Ai highlight -->
<div class="a" style="left:1488px;top:1030px;width:47px;height:47px;background:#4b4b5f"></div>
<div class="a" style="left:1488px;top:1077px;width:47px;height:3px;background:#76b9ed"></div>
<!-- running indicators -->
<div class="a" style="left:619px;top:1077px;width:38px;height:3px;background:#76b9ed"></div>
<div class="a" style="left:668px;top:1077px;width:38px;height:3px;background:#76b9ed"></div>
<div class="a" style="left:717px;top:1077px;width:27px;height:3px;background:#76b9ed"></div>
<div class="a" style="left:744px;top:1077px;width:11px;height:3px;background:#5a93bf"></div>
<div class="a" style="left:864px;top:1077px;width:27px;height:3px;background:#76b9ed"></div>
<div class="a" style="left:891px;top:1077px;width:11px;height:3px;background:#5a93bf"></div>
<!-- adobe app tiles -->
<div class="a" style="left:1065px;top:1040.7px;width:27.4px;height:26px;background:#001e36;border-radius:4.5px"></div>
<div class="a" style="left:1113.2px;top:1040.7px;width:27px;height:26px;background:#330000;border-radius:4.5px"></div>
<div class="a" style="left:1161.1px;top:1040.7px;width:27.2px;height:26px;background:#00005b;border-radius:4.5px"></div>
<div class="a" style="left:1209.2px;top:1040.7px;width:27.1px;height:26px;background:#00005b;border-radius:4.5px"></div>
<div class="a" style="left:1257.1px;top:1040.7px;width:27.3px;height:26px;background:#00005b;border-radius:4.5px"></div>
<div class="a" style="left:1497.3px;top:1040.7px;width:27.1px;height:26px;background:#330000;border-radius:4.5px"></div>
<div class="t" style="left:1069.61px;top:1045.03px;font-size:16.5px;font-weight:700;letter-spacing:-0.4px;color:#31a8ff">Ps</div>
<div class="t" style="left:1118.65px;top:1045.03px;font-size:16.5px;font-weight:700;letter-spacing:-0.2px;color:#ff9a00">Ai</div>
<div class="t" style="left:1166.68px;top:1045.03px;font-size:16.5px;font-weight:700;letter-spacing:-0.2px;color:#9999ff">Pr</div>
<div class="t" style="left:1212.45px;top:1045.03px;font-size:16.5px;font-weight:700;letter-spacing:-0.2px;color:#9999ff">Ae</div>
<div class="t" style="left:1259.74px;top:1045.03px;font-size:16.5px;font-weight:700;letter-spacing:-0.3px;color:#9999ff">Me</div>
<div class="t" style="left:1502.65px;top:1045.03px;font-size:16.5px;font-weight:700;letter-spacing:-0.2px;color:#ff9a00">Ai</div>
<!-- CC tile -->
<div class="a" style="left:1015.9px;top:1040.5px;width:27.3px;height:26.5px;border-radius:4.5px;background:radial-gradient(circle at 50% 55%,rgba(255,255,255,.75) 0,rgba(255,255,255,0) 55%),conic-gradient(from 0deg at 50% 50%,#ff1a00 0deg,#ff7a00 50deg,#ffd000 95deg,#5ae020 135deg,#20c0a0 175deg,#2a7cff 215deg,#6a50ff 255deg,#e020d0 300deg,#ff1a40 345deg,#ff1a00 360deg)"></div>
<!-- sticky notes -->
<div class="a" style="left:870px;top:1042px;width:26px;height:26px;border-radius:1.5px;background:linear-gradient(135deg,#ffe100 0%,#ffd400 55%,#f7b900 100%)"></div>
<!-- blue app -->
<div class="a" style="left:917.7px;top:1040.8px;width:27.6px;height:27.8px;border-radius:2.5px;background:linear-gradient(180deg,#3fb2ff 0%,#3d8cff 55%,#3f68ff 100%)"></div>
<!-- kakao icon -->
<div class="a" style="left:819px;top:1040px;width:30px;height:30px;border-radius:2.5px;background:#fae100"></div>
<svg style="left:0;top:1030px" width="1920" height="50" viewBox="0 1030 1920 50">
<defs>
<linearGradient id="fold" x1="0" x2="0" y1="0" y2="1"><stop offset="0" stop-color="#ffe08a"/><stop offset="1" stop-color="#ffcd45"/></linearGradient>
<linearGradient id="iegr" x1="0" x2="0" y1="0" y2="1"><stop offset="0" stop-color="#6fd6fa"/><stop offset="1" stop-color="#1b93dc"/></linearGradient>
<linearGradient id="edg1" x1="0" x2="1" y1="1" y2="0"><stop offset="0" stop-color="#0b5fbf"/><stop offset=".5" stop-color="#1aa0e6"/><stop offset="1" stop-color="#2fd0c8"/></linearGradient>
<linearGradient id="edg2" x1="0" x2="1" y1="0" y2="0"><stop offset="0" stop-color="#2bc4d8"/><stop offset="1" stop-color="#6fe36a"/></linearGradient>
<linearGradient id="hwp" x1="0" x2="0" y1="0" y2="1"><stop offset="0" stop-color="#2aa8ea"/><stop offset="1" stop-color="#1a8fd6"/></linearGradient>
<linearGradient id="hsh" x1="0" x2="0" y1="0" y2="1"><stop offset="0" stop-color="#f86f58"/><stop offset="1" stop-color="#e2523e"/></linearGradient>
<linearGradient id="brl" x1="0" x2="1" y1="0" y2="0"><stop offset="0" stop-color="#7a3408"/><stop offset=".3" stop-color="#e07a14"/><stop offset=".7" stop-color="#e88a1c"/><stop offset="1" stop-color="#7a3408"/></linearGradient>
</defs>
<!-- windows logo -->
<g fill="#fff"><path d="M19.8 1047.6 L28.2 1046.4 V1054.3 H19.8 Z"/><path d="M29.2 1046.3 L40.1 1044.7 V1054.3 H29.2 Z"/><path d="M19.8 1055.3 H28.2 V1063.3 L19.8 1062.1 Z"/><path d="M29.2 1055.3 H40.1 V1065 L29.2 1063.4 Z"/></g>
<!-- search icon -->
<circle cx="88" cy="1052" r="6.4" fill="none" stroke="#fff" stroke-width="1.4"/><path d="M83.5 1056.6 L75.4 1064.6" stroke="#fff" stroke-width="1.5"/>
<!-- cortana -->
<circle cx="520.1" cy="1055.1" r="8.6" fill="none" stroke="#fff" stroke-width="2.6"/>
<!-- task view -->
<g fill="none" stroke="#fff" stroke-width="1.2"><rect x="570.4" y="1050.6" width="12.8" height="7.8"/><path d="M570.4 1045.2 V1048 H583.2 V1045.2 M570.4 1064 V1061 H583.2 V1064 M588.6 1045 V1051 M588.6 1055 V1064"/></g>
<rect x="587" y="1051" width="3.2" height="3.6" fill="#fff"/>
<!-- file explorer -->
<path d="M624 1044.4 Q624 1043.1 625.3 1043.1 H634.6 L636.4 1045.2 H650.2 Q651.5 1045.2 651.5 1046.5 V1049 H624 Z" fill="#f2b200"/>
<rect x="624" y="1046.6" width="27.5" height="18.4" rx="1" fill="url(#fold)"/>
<path d="M629.3 1065.7 V1056.9 Q629.3 1055.3 630.9 1055.3 H645.4 Q647 1055.3 647 1056.9 V1065.7 H642.4 V1059.8 H634 V1065.7 Z" fill="#2d92e6"/>
<!-- chrome -->
<g>
<circle cx="686.9" cy="1054.6" r="14" fill="#db4437"/>
<path d="M686.9 1054.6 L674.8 1047.6 A14 14 0 0 0 686.9 1068.6 L693 1058 Z" fill="#0f9d58"/>
<path d="M686.9 1054.6 L686.9 1068.6 A14 14 0 0 0 699 1047.6 L686.9 1047.6 Z" fill="#ffcd40"/>
<path d="M674.8 1047.6 A14 14 0 0 1 699 1047.6 L686.9 1047.6 L680.8 1058.2 Z" fill="#db4437"/>
<path d="M686.9 1054.6 L680.8 1058.2 L686.9 1068.6 A14 14 0 0 1 674.8 1047.6 Z" fill="#0f9d58"/>
<circle cx="686.9" cy="1054.6" r="6.4" fill="#f1f1f1"/><circle cx="686.9" cy="1054.6" r="5" fill="#4285f4"/>
</g>
<!-- IE -->
<g>
<ellipse cx="736" cy="1054" rx="19" ry="7.4" transform="rotate(-43.5 736 1054)" fill="none" stroke="#e8a800" stroke-width="2"/>
<path d="M744.96 1061.31 A9.6 9.6 0 1 1 746.93 1056.57 H729.3" fill="none" stroke="#2aa6e8" stroke-width="5.4"/><path d="M744.96 1061.31 A9.6 9.6 0 0 1 727.80 1055.40" fill="none" stroke="#1c8fd8" stroke-width="5.4"/><path d="M727.80 1055.40 A9.6 9.6 0 0 1 746.93 1053.40" fill="none" stroke="#5ccaf6" stroke-width="5.4"/>
<path d="M723 1067 C718.4 1061 723 1051 732.4 1044.6 C738 1040.8 744 1039.4 748.2 1040.4" fill="none" stroke="#f6c320" stroke-width="2.1"/>
</g>
<!-- whale -->
<g>
<clipPath id="whc"><circle cx="785" cy="1054.2" r="14"/></clipPath>
<circle cx="785" cy="1054.2" r="14" fill="#16c6b4"/>
<g clip-path="url(#whc)">
<path d="M770 1049.4 C771 1040 790 1034 798.6 1044.4 C794 1050 786.6 1053.8 779.4 1053.4 C775 1053.2 771.4 1051.6 770 1049.4 Z" fill="#1b2c8c"/>
<path d="M798.6 1044.4 C803 1052 800 1066 789.6 1069.4 C782.6 1068.4 780.6 1060.4 785.4 1055.2 C789 1051.4 795 1049.4 798.6 1044.4 Z" fill="#f2f7f7"/>
</g>
<path d="M778.6 1066.4 L770.8 1068.4 C773.6 1066.6 774.6 1064.6 774.8 1062.6 Z" fill="#16c6b4"/>
<circle cx="784.2" cy="1053.8" r="0.9" fill="#14306a"/>
<g fill="#8aa0e8"><circle cx="779.4" cy="1045" r=".5"/><circle cx="784" cy="1043" r=".5"/><circle cx="787.6" cy="1046.4" r=".4"/><circle cx="781" cy="1049" r=".4"/></g>
</g>
<!-- kakao bubble -->
<ellipse cx="834" cy="1054" rx="11.8" ry="8.9" fill="#3b1e1e"/><path d="M829.4 1060.4 L827.2 1065.2 L833.6 1062 Z" fill="#3b1e1e"/>
<!-- sticky fold -->
<path d="M883.3 1055.3 H896 V1068 H883.3 Z" fill="#f2ac00"/><path d="M883.3 1055.3 H895.6 L883.3 1067.4 Z" fill="#3a3a3a"/>
<!-- blue app dots -->
<g fill="#fff"><circle cx="924.6" cy="1054.9" r="4.3"/><circle cx="931.5" cy="1054.9" r="4.3"/><circle cx="938.4" cy="1054.9" r="4.3"/></g>
<!-- barrel -->
<path d="M970 1040 H992.6 C996.6 1048 996.6 1062 992.6 1069.8 H970 C966 1062 966 1048 970 1040 Z" fill="url(#brl)"/>
<path d="M968.2 1044.2 H994.4 L995 1046.8 H967.6 Z M967.6 1063.2 H995 L994.4 1065.8 H968.2 Z" fill="#1a1008"/>
<rect x="967" y="1049" width="28.6" height="12.4" fill="#5a2a08" opacity=".55"/>
<!-- CC cloud -->
<g fill="none" stroke="#fff" stroke-width="1.3"><path d="M1024.6 1058.6 C1021 1058.6 1019.4 1056.4 1019.4 1054 C1019.4 1051.4 1021.6 1049.4 1024.4 1049.6 C1025.4 1047 1028 1045.8 1030.6 1046 C1034.8 1046.2 1038.6 1049.6 1038.6 1054 C1038.6 1057 1036.6 1059 1033.6 1059 H1031 L1025 1053"/><path d="M1031 1059 C1028 1059 1026 1057 1026 1054.6"/></g>
<!-- hancom hwp -->
<path d="M1307.1 1049 Q1307.1 1041 1315.1 1041 H1330.4 V1060.1 Q1330.4 1068.1 1322.4 1068.1 H1307.1 Z" fill="url(#hwp)"/>
<g fill="none" stroke="#fff" stroke-width="1.5"><path d="M1318.8 1046 V1048.6 M1313.6 1049.2 H1324.2 M1318.8 1058.4 V1061.4 M1313.8 1059.6 V1062.2 H1324"/><circle cx="1318.8" cy="1053.8" r="2.6"/></g>
<!-- hancom show -->
<path d="M1355.2 1049 Q1355.2 1041 1363.2 1041 H1378.6 V1060.1 Q1378.6 1068.1 1370.6 1068.1 H1355.2 Z" fill="url(#hsh)"/>
<g fill="none" stroke="#fff" stroke-width="1.4"><path d="M1363.6 1047.8 A4.6 4.6 0 1 0 1368.2 1052.4"/><path d="M1371 1048.2 H1376 M1371 1051.6 H1376 M1371 1055 H1376 M1358.6 1061.2 H1376"/></g><path d="M1364.6 1046.6 V1051.4 H1369.4 A4.8 4.8 0 0 0 1364.6 1046.6 Z" fill="#fff"/>
<!-- hancom pdf -->
<path d="M1403 1049 Q1403 1041 1411 1041 H1426.5 V1060.1 Q1426.5 1068.1 1418.5 1068.1 H1403 Z" fill="#e6282e"/>
<g fill="none" stroke="#fff" stroke-width="1.2"><ellipse cx="1411.4" cy="1050" rx="2.2" ry="4" transform="rotate(-12 1411.4 1050)"/><ellipse cx="1416.6" cy="1055.4" rx="4" ry="2.2" transform="rotate(12 1416.6 1055.4)"/><ellipse cx="1410.4" cy="1059.4" rx="2.2" ry="4" transform="rotate(22 1410.4 1059.4)"/></g>
<!-- edge -->
<g>
<circle cx="1462.9" cy="1054.9" r="14.4" fill="url(#edg1)"/>
<path d="M1450 1049 C1453 1042.6 1459 1040.4 1464 1040.5 C1472 1040.8 1477.4 1047 1477.3 1053.6 C1477.2 1058.6 1473 1061 1469 1060.8 C1465.4 1060.6 1463.4 1058.8 1464.4 1057 C1465.6 1054.8 1464.8 1051.6 1461.6 1050.4 C1457.4 1048.8 1452.4 1051 1450 1055.4 C1449.2 1053.4 1449.2 1051 1450 1049 Z" fill="url(#edg2)"/>
<path d="M1456 1057.6 C1456 1054.4 1458.4 1051.4 1461.6 1050.4 C1459 1052 1458.6 1055.2 1460 1058 C1461.8 1061.6 1466.6 1063.6 1471 1062.2 C1473 1061.6 1474.6 1060.6 1475.6 1059.4 C1473.4 1064.8 1468.6 1068.4 1463.6 1068 C1459 1065.8 1456 1061.6 1456 1057.6 Z" fill="#0c59a4"/>
</g>
<!-- tray chevron -->
<path d="M1546.2 1058.8 L1554 1051 L1561.8 1058.8" fill="none" stroke="#fff" stroke-width="1.3"/>
<!-- onedrive -->
<path d="M1580.4 1058.6 C1577.4 1058.6 1576.4 1054.4 1579.6 1053.4 C1579.6 1049.4 1584.6 1047.6 1587 1050.6 C1589.6 1049.6 1592 1051.6 1591.6 1054.2 C1593.6 1055 1593 1058.6 1590.6 1058.6 Z" fill="#9c9cac"/>
<path d="M1577.4 1061.2 C1574 1061.2 1573.4 1056.6 1576.6 1055.8 C1576.8 1052.2 1581.6 1051 1583.6 1053.8 C1586.4 1053 1588.4 1055.4 1587.6 1057.6 C1589.4 1058.4 1588.8 1061.2 1586.8 1061.2 Z" fill="#ececf0"/>
<circle cx="1588.6" cy="1059.8" r="5.3" fill="#e0202e"/><path d="M1586.2 1057.4 L1591 1062.2 M1591 1057.4 L1586.2 1062.2" stroke="#fff" stroke-width="1.4"/>
<!-- battery -->
<rect x="1608" y="1050.6" width="14.6" height="10" fill="none" stroke="#fff" stroke-width="1.3"/><rect x="1610" y="1052.6" width="10.6" height="6" fill="#fff"/><rect x="1623.2" y="1053.6" width="1.4" height="4" fill="#fff"/>
<path d="M1603 1049 V1052 M1606 1049 V1052 M1602.4 1052 H1606.6 V1054.6 Q1604.5 1056.6 1602.4 1054.6 Z M1604.5 1056 V1060.6 H1607.6" fill="none" stroke="#fff" stroke-width="1.1"/>
<!-- wifi -->
<g fill="none" stroke="#fff" stroke-width="1.3"><path d="M1645.6 1062 A5.4 5.4 0 0 1 1651.2 1056.4"/><path d="M1641.4 1062 A9.6 9.6 0 0 1 1651.2 1052.2"/><path d="M1637.2 1062 A13.8 13.8 0 0 1 1651.2 1048"/></g><circle cx="1650.4" cy="1061.4" r="1.5" fill="#fff"/>
<!-- volume -->
<g fill="none" stroke="#fff" stroke-width="1.2"><path d="M1664.4 1051.6 H1667 L1670.6 1048.2 V1062 L1667 1058.6 H1664.4 Z"/><path d="M1674 1052.4 A3.6 3.6 0 0 1 1674 1057.8"/><path d="M1677 1049.6 A7.6 7.6 0 0 1 1677 1060.6"/></g><path d="M1680 1046.4 A12 12 0 0 1 1680 1063.8" fill="none" stroke="#8a8a9a" stroke-width="1"/>
<!-- A -->
<path d="M1694.8 1063.6 L1702 1047 H1703.6 L1710.8 1063.6 M1697.6 1058 H1708" fill="none" stroke="#fff" stroke-width="1.5"/>
<!-- hanja toggle -->
<g fill="none" stroke="#fff" stroke-width="1.3"><path d="M1738.9 1045.4 V1048.6 M1731.6 1048.8 H1746.4"/><circle cx="1738.9" cy="1055" r="4.6"/></g><circle cx="1738.9" cy="1062.2" r="1.3" fill="#fff"/>
<!-- notifications -->
<path d="M1869 1044.8 H1889 V1062.1 H1880.6 L1877.6 1065.2 V1062.1 H1869 Z" fill="#fff"/>
<path d="M1873 1049.4 H1885 M1873 1053.4 H1885 M1873 1057.4 H1885" stroke="#1a1a2e" stroke-width="1.1"/>
<circle cx="1888.6" cy="1064.5" r="10" fill="#26262f" fill-opacity=".92" stroke="#8c8c94" stroke-width="1"/>
<rect x="1914.5" y="1030" width="1" height="50" fill="#80808a"/>
</svg>
<div class="t" style="left:825.60px;top:1050.84px;font-size:6.8px;font-weight:700;letter-spacing:-0.208px;color:#fae100;">TALK</div>
<div class="t" style="left:1416.20px;top:1060.51px;font-size:4.6px;font-weight:700;letter-spacing:-0.494px;color:#fff;">PDF</div>
<svg style="left:111.3px;top:1042.40px;" width="34.22" height="25.11" viewBox="0 -1000 1840 1350"><text x="0" y="0" font-size="1000" fill="#fff" textLength="1840" lengthAdjust="spacingAndGlyphs" font-family="'Liberation Sans','Noto Sans CJK KR',sans-serif">찾기</text></svg>
<svg style="left:1777.3px;top:1033.90px;" width="28.89" height="21.20" viewBox="0 -1000 1840 1350"><text x="0" y="0" font-size="1000" fill="#fff" textLength="1840" lengthAdjust="spacingAndGlyphs" font-family="'Liberation Sans','Noto Sans CJK KR',sans-serif">오후</text></svg>
<div class="t" style="left:1812.40px;top:1036.70px;font-size:14.3px;letter-spacing:-0.543px;color:#fff;">6:38</div>
<div class="t" style="left:1770.40px;top:1059.53px;font-size:14.5px;letter-spacing:0.255px;color:#fff;">2020-11-30</div>
<div class="t" style="left:1885.40px;top:1058.97px;font-size:11.5px;font-weight:700;color:#fff">3</div>
<svg style="left:967.4px;top:1049.90px;transform:scaleY(1.38);transform-origin:0 74%" width="25.67" height="12.56" viewBox="0 -1000 2760 1350"><text x="0" y="0" font-size="1000" font-weight="700" fill="#fff" textLength="2760" lengthAdjust="spacingAndGlyphs" font-family="'Liberation Sans','Noto Sans CJK KR',sans-serif" style="stroke:#2a1406;stroke-width:110;paint-order:stroke">폰트통</text></svg>

</body></html>
